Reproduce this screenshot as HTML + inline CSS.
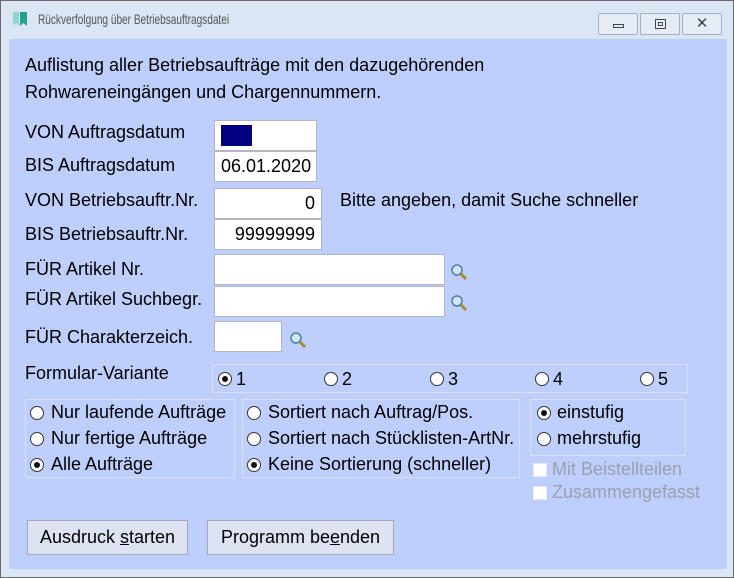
<!DOCTYPE html>
<html><head><meta charset="utf-8"><style>
*{box-sizing:border-box;margin:0;padding:0}
body{width:734px;height:578px;overflow:hidden;background:#fff;font-family:"Liberation Sans",Arial,sans-serif;font-size:18px;color:#000;position:relative}
.win{position:absolute;left:0;top:0;width:734px;height:578px;border:1px solid #6a6a6a;background:#dbe6f4}
.client{position:absolute;left:8px;top:38px;width:718px;height:530px;background:#bfcffd}
.a{position:absolute;white-space:nowrap;line-height:21px}
.inp{position:absolute;background:#fff;border:1px solid #b4b4c4;font-size:18px;line-height:29px;padding:0 6px}
.r{text-align:right}
.grp{position:absolute;border:1px solid #d8e0f4}
.rad{position:absolute;width:14px;height:14px;border:1px solid #333;border-radius:50%;background:#fff}
.rad.on::after{content:"";position:absolute;left:3px;top:3px;width:6px;height:6px;border-radius:50%;background:#111}
.chk{position:absolute;width:14px;height:14px;background:#fff;border:1px solid #e4e8f4}
.btn{position:absolute;background:#dde3f2;border:1px solid #a9a9b5;text-align:center;line-height:33px}
.tb{position:absolute;top:12px;width:40px;height:22px;border:1px solid #a8b0c0;border-radius:2px;background:#e4ecf6}
</style></head><body>
<div class="win">
<svg class="a" style="left:11px;top:10px" width="16" height="16"><path d="M1 1H7V15L4 12L1 15Z" fill="#8fd6c8"/><path d="M8 1H15V15L11.5 12L8 15Z" fill="#1fa38b"/></svg>
<div class="a" style="left:37px;top:8px;font-size:14px;color:#555;transform:scaleX(.72);transform-origin:left">Rückverfolgung über Betriebsauftragsdatei</div>
<div class="tb" style="left:597px"><div class="a" style="left:14px;top:10px;width:11px;height:4px;border:1px solid #444"></div></div>
<div class="tb" style="left:639px"><div class="a" style="left:14px;top:5px;width:11px;height:10px;border:1px solid #444"><div class="a" style="left:2px;top:2px;width:5px;height:4px;border:1px solid #444"></div></div></div>
<div class="tb" style="left:681px;font-size:15px;text-align:center;line-height:20px;color:#444">✕</div>
<div class="client"></div>
</div>
<div class="a" style="left:25px;top:55px">Auflistung aller Betriebsaufträge mit den dazugehörenden</div>
<div class="a" style="left:25px;top:82px">Rohwareneingängen und Chargennummern.</div>

<div class="a" style="left:25px;top:122px">VON Auftragsdatum</div>
<div class="inp" style="left:214px;top:120px;width:103px;height:31px"><div class="a" style="left:6px;top:4px;width:31px;height:21px;background:#000080"></div></div>
<div class="a" style="left:25px;top:155px">BIS Auftragsdatum</div>
<div class="inp" style="left:214px;top:151px;width:103px;height:31px">06.01.2020</div>
<div class="a" style="left:25px;top:190px">VON Betriebsauftr.Nr.</div>
<div class="inp r" style="left:214px;top:188px;width:108px;height:31px">0</div>
<div class="a" style="left:340px;top:190px">Bitte angeben, damit Suche schneller</div>
<div class="a" style="left:25px;top:224px">BIS Betriebsauftr.Nr.</div>
<div class="inp r" style="left:214px;top:219px;width:108px;height:31px">99999999</div>
<div class="a" style="left:25px;top:259px">FÜR Artikel Nr.</div>
<div class="inp" style="left:214px;top:254px;width:231px;height:31px"></div>
<div class="a" style="left:25px;top:289px">FÜR Artikel Suchbegr.</div>
<div class="inp" style="left:214px;top:286px;width:231px;height:31px"></div>
<div class="a" style="left:25px;top:327px">FÜR Charakterzeich.</div>
<div class="inp" style="left:214px;top:321px;width:68px;height:31px"></div>
<svg class="a" style="left:450px;top:263px" width="18" height="18"><circle cx="7" cy="7" r="5" fill="#cfe6f4" stroke="#4f7fa0" stroke-width="1.5"/><path d="M11 11 L16 16" stroke="#b08a2a" stroke-width="3"/></svg>
<svg class="a" style="left:450px;top:294px" width="18" height="18"><circle cx="7" cy="7" r="5" fill="#cfe6f4" stroke="#4f7fa0" stroke-width="1.5"/><path d="M11 11 L16 16" stroke="#b08a2a" stroke-width="3"/></svg>
<svg class="a" style="left:289px;top:331px" width="18" height="18"><circle cx="7" cy="7" r="5" fill="#cfe6f4" stroke="#4f7fa0" stroke-width="1.5"/><path d="M11 11 L16 16" stroke="#b08a2a" stroke-width="3"/></svg>

<div class="a" style="left:25px;top:363px">Formular-Variante</div>
<div class="grp" style="left:212px;top:364px;width:476px;height:29px"></div>
<div class="rad on" style="left:218px;top:372px"></div><div class="a" style="left:236px;top:369px">1</div>
<div class="rad" style="left:324px;top:372px"></div><div class="a" style="left:342px;top:369px">2</div>
<div class="rad" style="left:430px;top:372px"></div><div class="a" style="left:448px;top:369px">3</div>
<div class="rad" style="left:535px;top:372px"></div><div class="a" style="left:553px;top:369px">4</div>
<div class="rad" style="left:640px;top:372px"></div><div class="a" style="left:658px;top:369px">5</div>

<div class="grp" style="left:25px;top:399px;width:210px;height:79px"></div>
<div class="grp" style="left:242px;top:399px;width:278px;height:79px"></div>
<div class="grp" style="left:530px;top:399px;width:156px;height:57px"></div>
<div class="rad" style="left:30px;top:406px"></div><div class="a" style="left:51px;top:402px">Nur laufende Aufträge</div>
<div class="rad" style="left:30px;top:432px"></div><div class="a" style="left:51px;top:428px">Nur fertige Aufträge</div>
<div class="rad on" style="left:30px;top:458px"></div><div class="a" style="left:51px;top:454px">Alle Aufträge</div>
<div class="rad" style="left:247px;top:406px"></div><div class="a" style="left:268px;top:402px">Sortiert nach Auftrag/Pos.</div>
<div class="rad" style="left:247px;top:432px"></div><div class="a" style="left:268px;top:428px">Sortiert nach Stücklisten-ArtNr.</div>
<div class="rad on" style="left:247px;top:458px"></div><div class="a" style="left:268px;top:454px">Keine Sortierung (schneller)</div>
<div class="rad on" style="left:537px;top:406px"></div><div class="a" style="left:557px;top:402px">einstufig</div>
<div class="rad" style="left:537px;top:432px"></div><div class="a" style="left:557px;top:428px">mehrstufig</div>
<div class="chk" style="left:533px;top:463px"></div><div class="a" style="left:552px;top:459px;color:#9aa0b0">Mit Beistellteilen</div>
<div class="chk" style="left:533px;top:486px"></div><div class="a" style="left:552px;top:482px;color:#9aa0b0">Zusammengefasst</div>

<div class="btn" style="left:27px;top:520px;width:161px;height:35px">Ausdruck <u>s</u>tarten</div>
<div class="btn" style="left:207px;top:520px;width:187px;height:35px">Programm be<u>e</u>nden</div>
</body></html>
